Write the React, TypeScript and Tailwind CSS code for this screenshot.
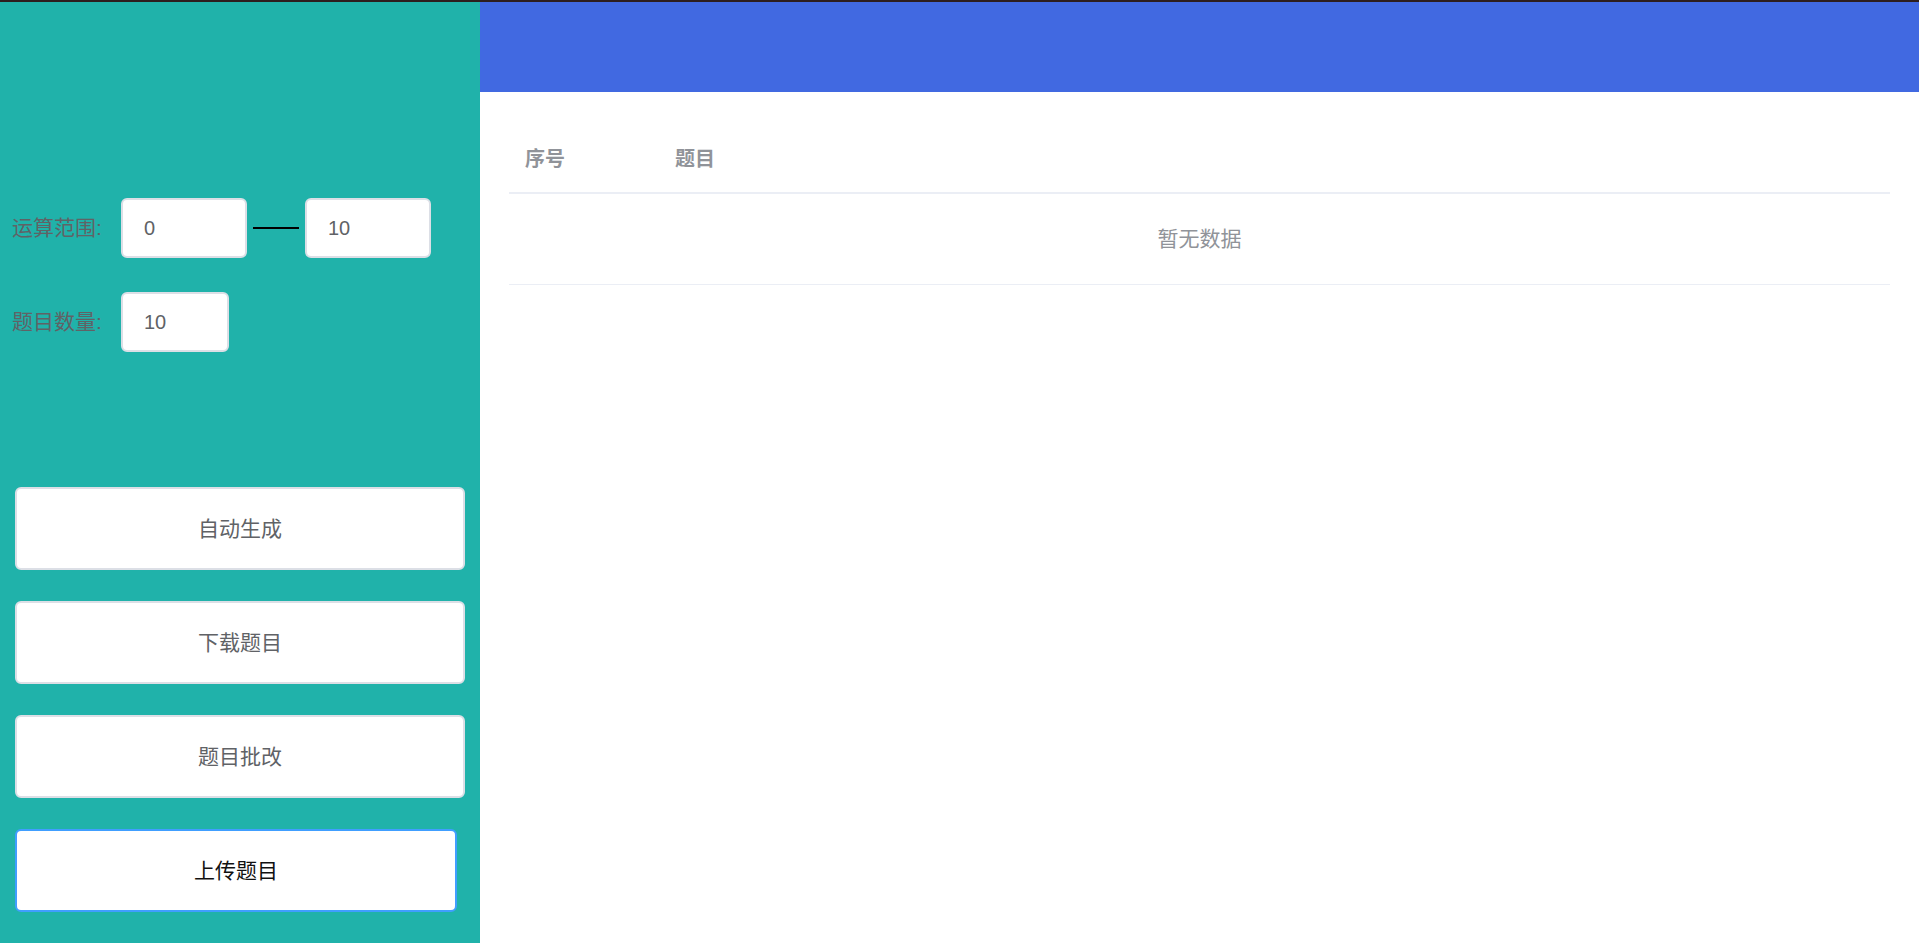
import { useState } from 'react';

const font = { fontFamily: '"Liberation Sans", "Noto Sans CJK SC", sans-serif' };

const App = () => {
    const [min, setMin] = useState('0');
    const [max, setMax] = useState('10');
    const [count, setCount] = useState('10');

    const buttons = ['自动生成', '下载题目', '题目批改'];

    return (
        <div className="w-[1919px] h-[943px] flex flex-col overflow-hidden" style={font}>
            <div className="h-[2px] bg-[#2d1e1e]" />
            <div className="flex flex-1">
                {/* sidebar */}
                <div className="w-[480px] bg-[#20b2aa] flex flex-col pt-[196px]">
                    <div className="flex items-center pl-3">
                        <span className="w-[109px] text-[21px] text-[#606266]">运算范围:</span>
                        <input
                            value={min}
                            onChange={(e) => setMin(e.target.value)}
                            className="w-[126px] h-[60px] bg-white border-2 border-[#dcdfe6] rounded-md pl-[21px] text-[20px] text-[#606266] outline-none"
                        />
                        <div className="w-[46px] h-[2px] bg-black mx-[6px]" />
                        <input
                            value={max}
                            onChange={(e) => setMax(e.target.value)}
                            className="w-[126px] h-[60px] bg-white border-2 border-[#dcdfe6] rounded-md pl-[21px] text-[20px] text-[#606266] outline-none"
                        />
                    </div>
                    <div className="flex items-center pl-3 mt-[34px]">
                        <span className="w-[109px] text-[21px] text-[#606266]">题目数量:</span>
                        <input
                            value={count}
                            onChange={(e) => setCount(e.target.value)}
                            className="w-[108px] h-[60px] bg-white border-2 border-[#dcdfe6] rounded-md pl-[21px] text-[20px] text-[#606266] outline-none"
                        />
                    </div>

                    <div className="flex flex-col gap-[31px] pl-[15px] mt-[135px]">
                        {buttons.map((b) => (
                            <button
                                key={b}
                                className="w-[450px] h-[83px] bg-white border-2 border-[#dcdfe6] rounded-md text-[21px] text-[#606266]"
                            >
                                {b}
                            </button>
                        ))}
                        <button className="w-[442px] h-[83px] bg-white border-2 border-[#409eff] rounded-md text-[21px] text-[#111]">
                            上传题目
                        </button>
                    </div>
                </div>

                {/* main */}
                <div className="flex-1 flex flex-col bg-white">
                    <div className="h-[90px] bg-[#4169e1]" />
                    <div className="mx-[29px] mt-[34px]">
                        <div className="flex items-center h-[68px] border-b-2 border-[#ebeef5] text-[20px] font-bold text-[#909399]">
                            <div className="w-[150px] pl-[16px]">序号</div>
                            <div className="pl-[16px]">题目</div>
                        </div>
                        <div className="h-[91px] flex items-center justify-center border-b border-[#ebeef5] text-[21px] text-[#909399]">
                            暂无数据
                        </div>
                    </div>
                </div>
            </div>
        </div>
    );
};

export default App;
